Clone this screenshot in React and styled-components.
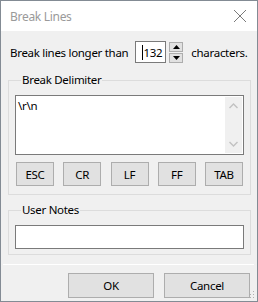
import styled, { createGlobalStyle } from 'styled-components';

const Global = createGlobalStyle`
  html, body { margin: 0; padding: 0; background: #f0f0f0; }
  * { box-sizing: border-box; }
`;

export default function App() {
  return (
    <>
      <Global />
      <Window>
        <TitleBar>
          <Title>Break Lines</Title>
          <Close width="14" height="14" viewBox="0 0 14 14">
            <path d="M1 1 L13 13 M13 1 L1 13" stroke="#7a7a7a" strokeWidth="1" fill="none" />
          </Close>
        </TitleBar>
        <Body>
          <Row>
            <span>Break lines longer than</span>
            <NumBox>
              <Caret />
              132
            </NumBox>
            <Spinner>
              <SpinBtn>
                <svg width="7" height="4" viewBox="0 0 7 4"><path d="M3.5 0 L7 4 L0 4 Z" fill="#000" /></svg>
              </SpinBtn>
              <SpinBtn>
                <svg width="7" height="4" viewBox="0 0 7 4"><path d="M0 0 L7 0 L3.5 4 Z" fill="#000" /></svg>
              </SpinBtn>
            </Spinner>
            <span>characters.</span>
          </Row>

          <Group>
            <Legend>Break Delimiter</Legend>
            <TextBox>
              <TextContent>\r\n</TextContent>
              <ScrollTrack>
                <svg width="9" height="6" viewBox="0 0 9 6"><path d="M0.5 5 L4.5 1 L8.5 5" stroke="#c2c2c2" strokeWidth="1.4" fill="none" /></svg>
                <svg width="9" height="6" viewBox="0 0 9 6"><path d="M0.5 1 L4.5 5 L8.5 1" stroke="#c2c2c2" strokeWidth="1.4" fill="none" /></svg>
              </ScrollTrack>
            </TextBox>
            <KeyRow>
              {['ESC', 'CR', 'LF', 'FF', 'TAB'].map((k) => (
                <Button key={k} $w={38} $h={24}>{k}</Button>
              ))}
            </KeyRow>
          </Group>

          <Group $second>
            <Legend>User Notes</Legend>
            <NotesInput />
          </Group>

          <Separator />

          <Footer>
            <Button $w={86} $h={25}>OK</Button>
            <Button $w={86} $h={25}>Cancel</Button>
          </Footer>
          <Grip width="8" height="8" viewBox="0 0 8 8">
            <rect x="6" y="0" width="1" height="1" fill="#b0b0b0" />
            <rect x="3" y="3" width="1" height="1" fill="#b0b0b0" />
            <rect x="6" y="3" width="1" height="1" fill="#b0b0b0" />
            <rect x="0" y="6" width="1" height="1" fill="#b0b0b0" />
            <rect x="3" y="6" width="1" height="1" fill="#b0b0b0" />
            <rect x="6" y="6" width="1" height="1" fill="#b0b0b0" />
          </Grip>
        </Body>
      </Window>
    </>
  );
}

const Window = styled.div`
  width: 258px;
  height: 302px;
  border: 1px solid #838b94;
  display: flex;
  flex-direction: column;
  font-family: 'Noto Sans', 'Open Sans', sans-serif;
  font-size: 11.5px;
  letter-spacing: -0.3px;
  color: #000;
  position: relative;
`;

const TitleBar = styled.div`
  height: 30px;
  background: #ffffff;
  display: flex;
  align-items: center;
  justify-content: space-between;
  padding: 0 9px 0 9px;
`;

const Title = styled.div`
  color: #9a9a9a;
  font-size: 12px;
`;

const Close = styled.svg`
  margin-right: 1px;
`;

const Body = styled.div`
  flex: 1;
  background: #f0f0f0;
  display: flex;
  flex-direction: column;
  padding-top: 10px;
`;

const Row = styled.div`
  display: flex;
  align-items: center;
  height: 22px;
  padding-left: 9px;
  white-space: nowrap;
`;

const NumBox = styled.div`
  width: 31px;
  height: 22px;
  margin-left: 7px;
  background: #fff;
  border: 1px solid #7a7a7a;
  display: flex;
  align-items: center;
  justify-content: flex-end;
  padding-right: 3px;
`;

const Caret = styled.span`
  width: 1px;
  height: 15px;
  background: #000;
  margin-right: 1px;
`;

const Spinner = styled.div`
  display: flex;
  flex-direction: column;
  gap: 1px;
  margin-left: 3px;
  margin-right: 8px;
`;

const SpinBtn = styled.div`
  width: 14px;
  height: 10px;
  background: #e1e1e1;
  border: 1px solid #adadad;
  display: flex;
  align-items: center;
  justify-content: center;
`;

const Group = styled.fieldset`
  margin: ${(p) => (p.$second ? '7px' : '9px')} 6px 0 7px;
  padding: 7px 6px ${(p) => (p.$second ? '5px' : '8px')} 6px;
  border: 1px solid #dcdcdc;
  min-width: 0;
`;

const Legend = styled.legend`
  padding: 0 1px;
  margin-left: 6px;
  line-height: 16px;
`;

const TextBox = styled.div`
  height: 60px;
  background: #fff;
  border: 1px solid #7a7a7a;
  display: flex;
`;

const TextContent = styled.div`
  flex: 1;
  padding: 2px 2px;
  line-height: 16px;
`;

const ScrollTrack = styled.div`
  width: 17px;
  margin: 1px;
  background: #f0f0f0;
  display: flex;
  flex-direction: column;
  align-items: center;
  justify-content: space-between;
  padding: 6px 0;
`;

const KeyRow = styled.div`
  display: flex;
  justify-content: space-between;
  margin-top: 7px;
  padding: 0 1px;
`;

const Button = styled.div`
  width: ${(p) => p.$w}px;
  height: ${(p) => p.$h}px;
  background: #e1e1e1;
  border: 1px solid #adadad;
  display: flex;
  align-items: center;
  justify-content: center;
`;

const NotesInput = styled.div`
  height: 24px;
  background: #fff;
  border: 1px solid #7a7a7a;
`;

const Separator = styled.div`
  height: 1px;
  margin: 9px 3px 0 2px;
  background: #dcdcdc;
  border-bottom: 1px solid #fff;
`;

const Footer = styled.div`
  display: flex;
  justify-content: flex-end;
  gap: 10px;
  margin-top: 8px;
  padding-right: 7px;
`;

const Grip = styled.svg`
  position: absolute;
  right: 2px;
  bottom: 2px;
`;
